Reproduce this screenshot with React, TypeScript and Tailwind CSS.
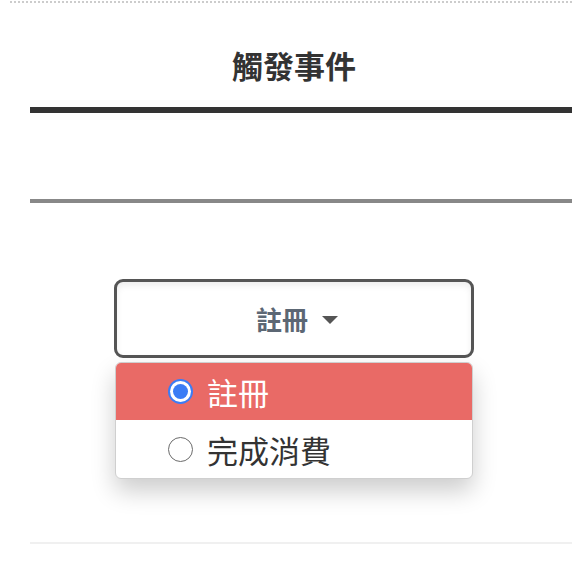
import React from "react";

const font = { fontFamily: '"Noto Sans CJK TC", "Noto Sans", sans-serif' };

export default function App() {
  return (
    <div className="w-[572px] h-[562px] overflow-hidden bg-white" style={font}>
      <div className="mt-[1px] ml-[10px] h-[2px] bg-[repeating-linear-gradient(90deg,#cccccc_0px,#cccccc_2px,transparent_2px,transparent_4px)]" />
      <div className="ml-[30px] w-[528px] flex flex-col">
        <div className="mt-[42px] h-[40px] leading-[40px] text-center text-[31px] font-bold text-[#333]">
          觸發事件
        </div>
        <div className="mt-[22px] h-[6px] w-[542px] bg-[#333]" />
        <div className="mt-[86px] h-[4px] w-[542px] bg-[#888]" />
        <div className="mt-[76px] mx-auto w-[360px] h-[79px] rounded-[9px] border-[3px] border-[#555] bg-white shadow-[inset_0_4px_6px_rgba(0,0,0,0.07)] flex items-center justify-center gap-[14px]">
          <span className="text-[26px] font-semibold text-[#5c6774] ml-[6px]">註冊</span>
          <svg width="16" height="8" viewBox="0 0 16 8" className="mt-[2px]">
            <path d="M0 0 L16 0 L8 8 Z" fill="#555" />
          </svg>
        </div>
        <div className="mt-[4px] mx-auto w-[358px] rounded-[6px] border border-[#cfcfcf] bg-white shadow-[0_12px_24px_rgba(0,0,0,0.2)] overflow-hidden">
          <div className="h-[57px] bg-[#e96a66] flex items-center pl-[52px] gap-[14px]">
            <div className="w-[25px] h-[25px] rounded-full bg-[#3b7cf5] p-[2px]">
              <div className="w-full h-full rounded-full bg-white p-[3px]">
                <div className="w-full h-full rounded-full bg-[#3b7cf5]" />
              </div>
            </div>
            <span className="text-[31px] text-white leading-none">註冊</span>
          </div>
          <div className="h-[58px] flex items-center pl-[52px] gap-[14px]">
            <div className="w-[25px] h-[25px] rounded-full border-[1.5px] border-[#6b6b6b] bg-white" />
            <span className="text-[31px] text-[#333] leading-none">完成消費</span>
          </div>
        </div>
        <div className="mt-[63px] h-[2px] w-[542px] bg-[#f0f0f0]" />
      </div>
    </div>
  );
}
